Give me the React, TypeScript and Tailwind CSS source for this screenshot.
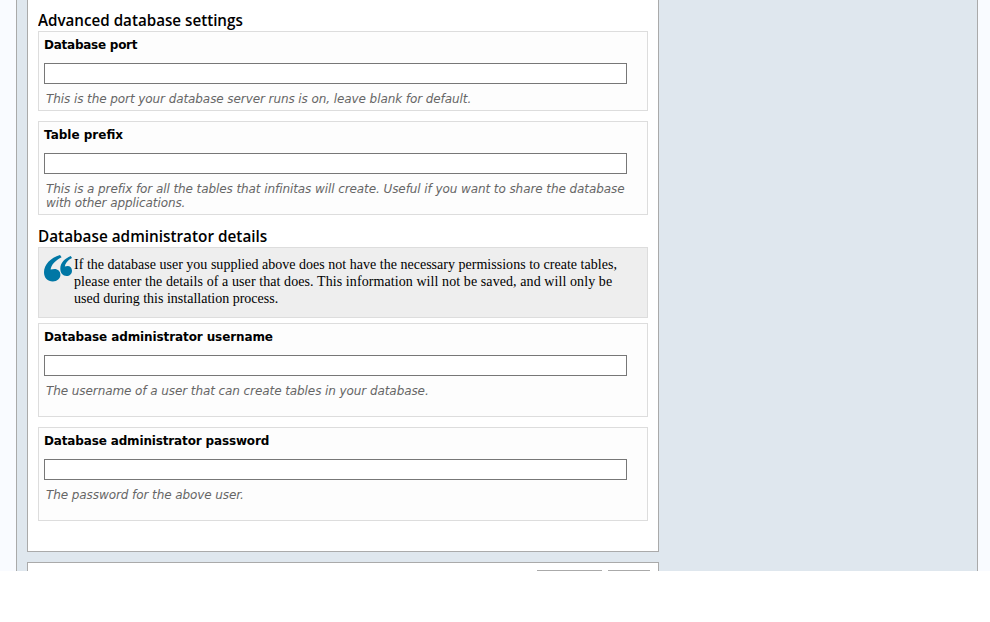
import type { ReactNode } from "react";

type FieldProps = { label: string; hint: ReactNode; className: string; labelSpacing?: string };

function Field({ label, hint, className, labelSpacing = "" }: FieldProps) {
  return (
    <div className={`border border-[#dddddd] bg-[#fdfdfd] px-[5px] pt-[5px] ${className}`}>
      <label className="block font-['DejaVu_Sans',sans-serif] text-[12px] leading-4 font-bold text-black">
        <span className={labelSpacing}>{label}</span>
        <input
          type="text"
          className="mt-[10px] block h-[21px] w-[583px] border border-[#777777] bg-white px-1 font-normal outline-none"
        />
      </label>
      <p className="mt-[8px] pl-[2px] font-['DejaVu_Sans',sans-serif] text-[12px] leading-[14px] tracking-[-0.083px] whitespace-nowrap text-[#666666] italic">
        {hint}
      </p>
    </div>
  );
}

function Heading({ children, className }: { children: ReactNode; className: string }) {
  return (
    <h2 className={`w-fit origin-left font-['Trebuchet_MS','Open_Sans',sans-serif] text-[16px] leading-5 font-semibold whitespace-nowrap text-black ${className}`}>
      {children}
    </h2>
  );
}

function QuoteMark() {
  return (
    <svg className="mt-[7px] h-[27px] w-[28px] shrink-0" viewBox="0 0 28 27" fill="#0077a5">
      <path d="M16 0C6.5 2.8 0 9.5 0 17.3C0 23 3.6 26.5 8.8 26.5C13.2 26.5 16.4 23.7 16.4 19.8C16.4 16.2 13.8 14 10.6 14C9.3 14 8 14.2 6.6 14.6C7.2 9.8 10.9 5.6 17.6 2.2Z" />
      <path d="M26.8 0.9C20.8 3.2 16.3 7.8 16.3 13.5C16.3 18.2 18.9 21 22.5 21C25.7 21 28 18.8 28 15.7C28 12.8 26 11.1 23.6 11.1C22.6 11.1 21.7 11.3 20.8 11.6C21.1 8.2 23.6 5.3 28 3Z" />
    </svg>
  );
}

export default function App() {
  return (
    <div className="h-[622px] overflow-hidden bg-white">
      <div className="h-[571px] overflow-hidden bg-[#f9fbff] pl-4">
        <main className="h-full w-[962px] border-x border-[#aaaaaa] bg-[#dfe7ee] pl-[10px]">
          <section className="h-[552px] w-[632px] border border-t-0 border-[#aaaaaa] bg-white px-[10px] pt-[10px]">
            <Heading className="scale-x-[0.948]">Advanced database settings</Heading>
            <Field
              className="mt-px h-[80px]"
              label="Database port"
              labelSpacing="tracking-[-0.25px]"
              hint="This is the port your database server runs is on, leave blank for default."
            />
            <Field
              className="mt-[10px] h-[94px]"
              label="Table prefix"
              hint={
                <>
                  This is a prefix for all the tables that infinitas will create. Useful if you want to share the database
                  <br />
                  with other applications.
                </>
              }
            />
            <Heading className="mt-[11px] scale-x-[0.957]">Database administrator details</Heading>
            <blockquote className="mt-px flex h-[71px] border border-[#dddddd] bg-[#eeeeee] pl-[5px]">
              <QuoteMark />
              <p className="ml-[2px] pt-[8px] font-['Liberation_Serif',serif] text-[14px] leading-[17px] whitespace-nowrap text-black">
                <span className="tracking-[0.018px]">
                  If the database user you supplied above does not have the necessary permissions to create tables,
                </span>
                <br />
                <span className="tracking-[0.083px]">
                  please enter the details of a user that does. This information will not be saved, and will only be
                </span>
                <br />
                used during this installation process.
              </p>
            </blockquote>
            <Field
              className="mt-[5px] h-[94px]"
              label="Database administrator username"
              labelSpacing="tracking-[-0.1px]"
              hint="The username of a user that can create tables in your database."
            />
            <Field
              className="mt-[10px] h-[94px]"
              label="Database administrator password"
              labelSpacing="tracking-[-0.15px]"
              hint="The password for the above user."
            />
          </section>
          <section className="mt-[10px] flex h-[50px] w-[632px] justify-end gap-[6px] border border-[#aaaaaa] bg-white pt-[7px] pr-2">
            <button type="button" aria-label="Previous" className="h-6 w-[65px] border-t border-[#aaaaaa]" />
            <button type="button" aria-label="Next" className="h-6 w-[42px] border-t border-[#aaaaaa]" />
          </section>
        </main>
      </div>
    </div>
  );
}
